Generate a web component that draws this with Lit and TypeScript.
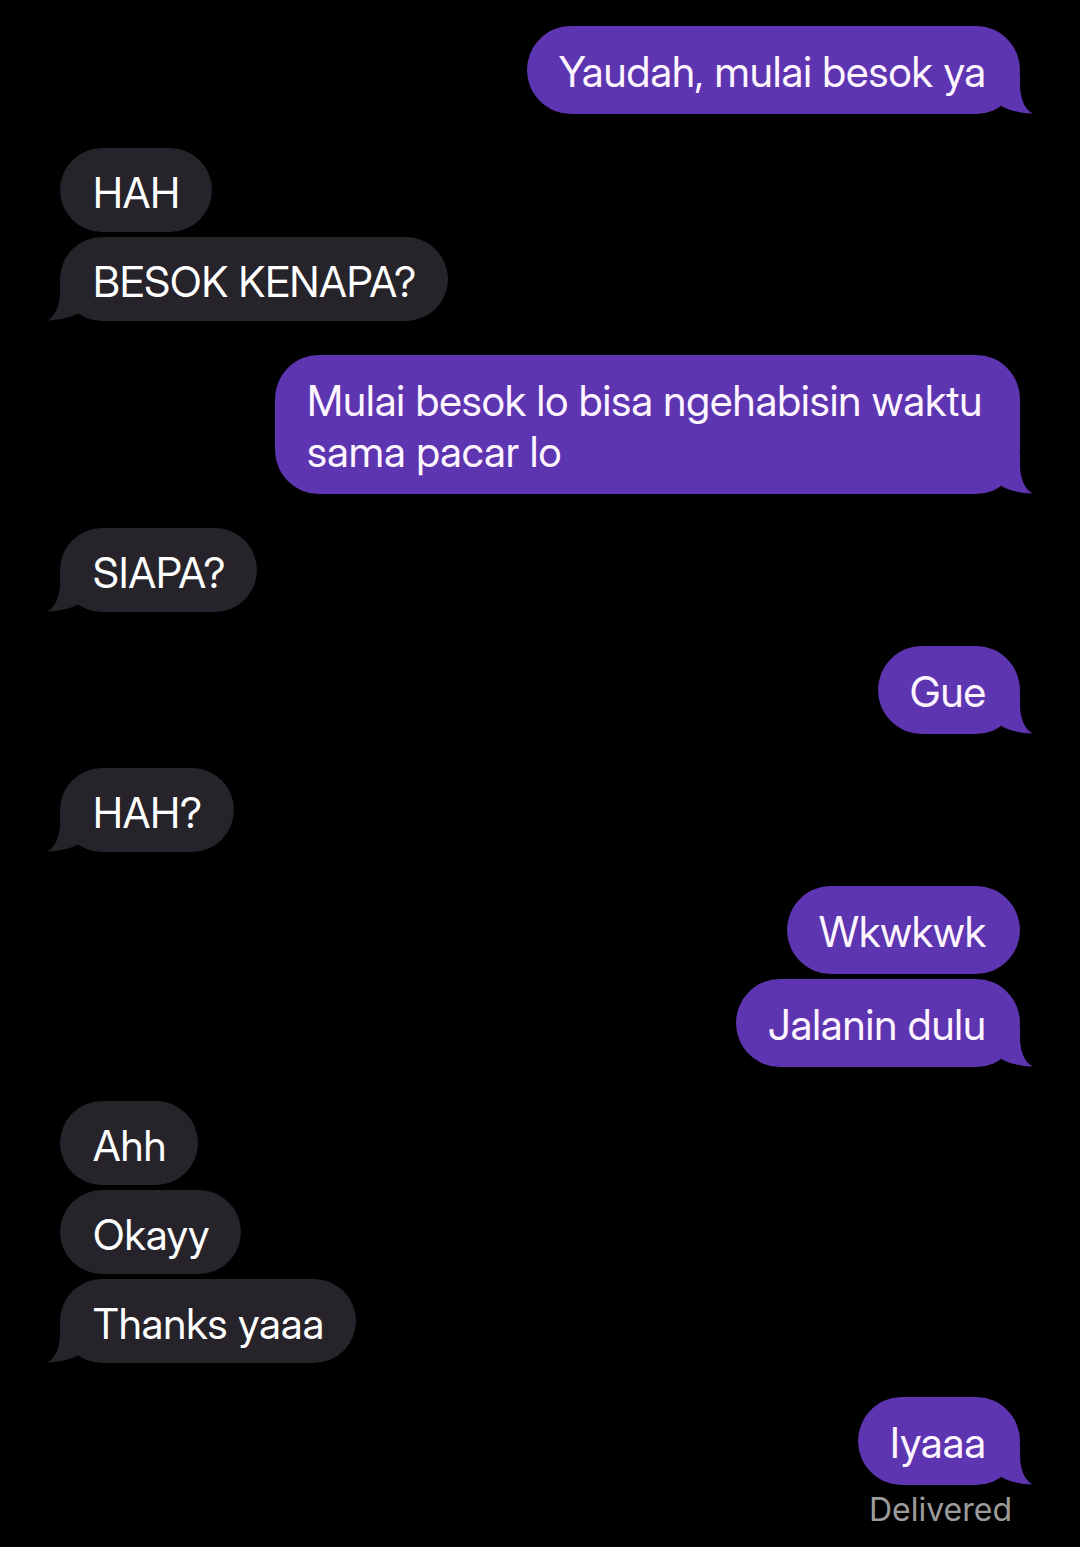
import { LitElement, html, css, svg } from "lit";
import { customElement, property, state } from "lit/decorators.js";
import { classMap } from "lit/directives/class-map.js";

interface MessageGroup {
  from: "me" | "them";
  texts: string[];
  status?: string;
}

const conversation: MessageGroup[] = [
  { from: "me", texts: ["Yaudah, mulai besok ya"] },
  { from: "them", texts: ["HAH", "BESOK KENAPA?"] },
  { from: "me", texts: ["Mulai besok lo bisa ngehabisin waktu sama pacar lo"] },
  { from: "them", texts: ["SIAPA?"] },
  { from: "me", texts: ["Gue"] },
  { from: "them", texts: ["HAH?"] },
  { from: "me", texts: ["Wkwkwk", "Jalanin dulu"] },
  { from: "them", texts: ["Ahh", "Okayy", "Thanks yaaa"] },
  { from: "me", texts: ["Iyaaa"], status: "Delivered" },
];

/** One message; the last of a group carries the tail. */
@customElement("chat-bubble")
export class ChatBubble extends LitElement {
  @property() from: "me" | "them" = "me";
  @property({ type: Boolean }) tail = false;

  static styles = css`
    :host {
      display: block;
      max-width: calc(100% - 215px);
    }
    .bubble {
      position: relative;
      color: #ffffff;
      font-size: 42px;
      line-height: 51px;
      overflow-wrap: anywhere;
    }
    .me {
      padding: 20px 34px 17px 32px;
      border-radius: 44px;
      background: #5e35b1;
      color: #fff5ff;
    }
    .them {
      padding: 19px 32px 14px 33px;
      border-radius: 42px;
      background: #26232a;
    }
    .tail {
      position: absolute;
      right: -13px;
      bottom: 0;
      width: 33px;
      height: 40px;
      fill: #5e35b1;
    }
    .them .tail {
      right: auto;
      left: -13px;
      fill: #26232a;
      transform: scaleX(-1);
    }
  `;

  render() {
    return html`<div class=${classMap({ bubble: true, [this.from]: true })}>
      <slot></slot>
      ${this.tail
        ? html`<svg class="tail" viewBox="0 0 33 40" aria-hidden="true">
            ${svg`<path d="M19 0H20V10C20 23 23.500 34 32.500 39.600C21 39 11 37 2 32.500L2 20Z" />`}
          </svg>`
        : null}
    </div>`;
  }
}

@customElement("app-root")
export class AppRoot extends LitElement {
  @state() private groups = conversation;

  static styles = css`
    :host {
      display: block;
      min-height: 100vh;
      box-sizing: border-box;
      background: #000000;
      font-family: "Inter Display", Inter, "Liberation Sans", sans-serif;
    }
    .thread {
      display: flex;
      flex-direction: column;
      gap: 34px;
      padding: 26px 60px 16px;
    }
    .group {
      display: flex;
      flex-direction: column;
      align-items: flex-start;
      gap: 5px;
    }
    .group.me {
      align-items: flex-end;
    }
    .status {
      padding-right: 8px;
      color: #9c9c9c;
      font-family: Inter, sans-serif;
      font-size: 32px;
      line-height: 40px;
    }
  `;

  render() {
    return html`<main class="thread">
      ${this.groups.map(
        (group) => html`<section class=${classMap({ group: true, [group.from]: true })}>
          ${group.texts.map(
            (text, i) => html`<chat-bubble
              from=${group.from}
              ?tail=${i === group.texts.length - 1}
              >${text}</chat-bubble
            >`
          )}
          ${group.status ? html`<div class="status">${group.status}</div>` : null}
        </section>`
      )}
    </main>`;
  }
}
